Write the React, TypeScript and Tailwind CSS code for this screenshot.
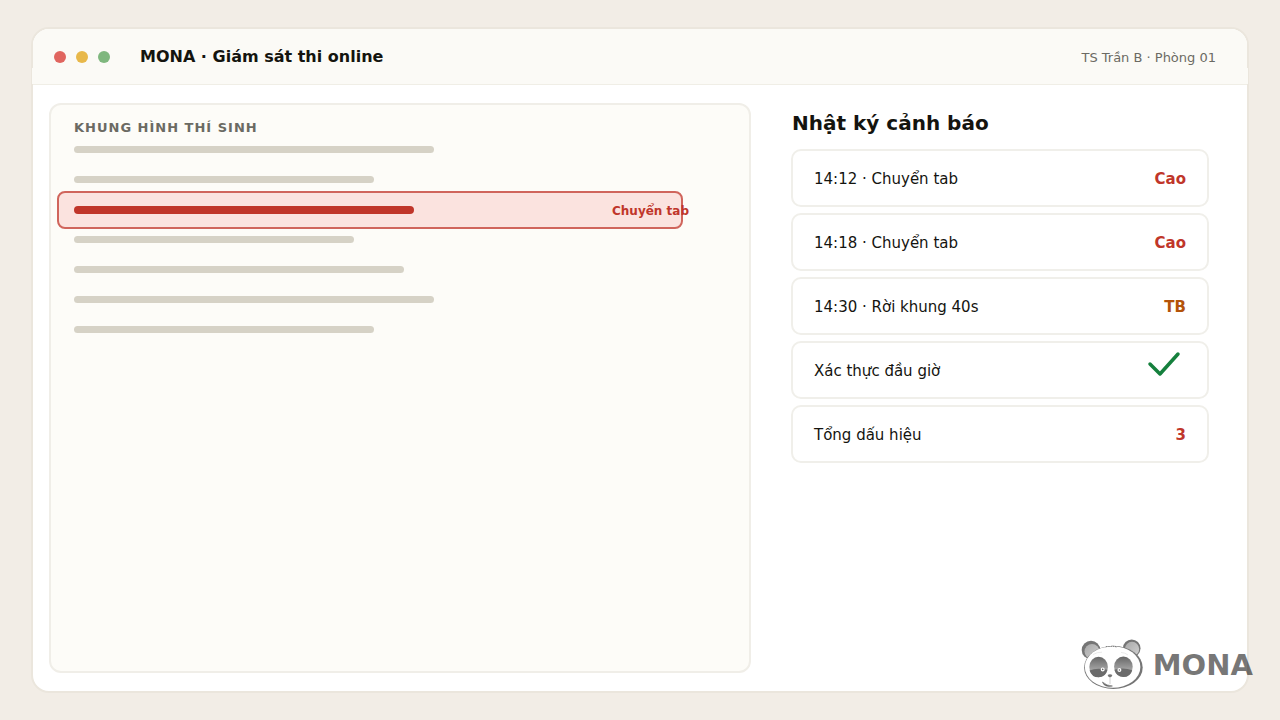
import { clsx } from "clsx"

const frameLines = [
  { width: 360 },
  { width: 300 },
  { width: 340, alert: "Chuyển tab" },
  { width: 280 },
  { width: 330 },
  { width: 360 },
  { width: 300 },
]

const logEntries = [
  { label: "14:12 · Chuyển tab", value: "Cao", tone: "high" },
  { label: "14:18 · Chuyển tab", value: "Cao", tone: "high" },
  { label: "14:30 · Rời khung 40s", value: "TB", tone: "medium" },
  { label: "Xác thực đầu giờ", value: "", tone: "ok" },
  { label: "Tổng dấu hiệu", value: "3", tone: "high" },
]

function CheckMark() {
  return (
    <svg className="mr-1 mb-3.5 h-7 w-9" viewBox="0 0 36 28" fill="none" role="img" aria-label="Đạt">
      <path d="M4 14l10 10L32 4" stroke="#15803d" strokeWidth="3.5" strokeLinecap="round" strokeLinejoin="round" />
    </svg>
  )
}

function PandaLogo() {
  return (
    <svg className="h-[52px] w-16" viewBox="0 0 64 52" fill="none" aria-hidden="true">
      <defs>
        <linearGradient id="ear" x1="0" y1="0" x2="1" y2="1">
          <stop offset="0" stopColor="#a8a8a8" />
          <stop offset="1" stopColor="#d0d0d0" />
        </linearGradient>
        <linearGradient id="patch" x1="0" y1="0" x2="0" y2="1">
          <stop offset="0" stopColor="#666" />
          <stop offset="0.6" stopColor="#a0a0a0" />
        </linearGradient>
      </defs>

      {/* Ears */}
      <circle cx="11" cy="12" r="9.3" fill="#757575" />
      <circle cx="12" cy="13.5" r="7.5" fill="url(#ear)" />
      <circle cx="51.7" cy="10.3" r="8.8" fill="#757575" />
      <circle cx="52" cy="11" r="7.2" fill="url(#ear)" />

      {/* Head */}
      <ellipse cx="33.4" cy="29.4" rx="29.3" ry="21.6" fill="#757575" />
      <ellipse cx="32.6" cy="29" rx="27.8" ry="20.8" fill="#fff" />
      <path d="M26 9.4l1-1.4M28.5 9l1-1M31 9l.6-1.2M33.5 9l-.4-1.2M36 9.4l-1-1.4" stroke="#666" strokeWidth="0.8" />
      <path d="M13 16.6q4-2.6 9-2.4M41 14.4q4 .2 7 2.6" stroke="#e4e4e4" strokeWidth="0.8" />

      {/* Eyes */}
      <ellipse cx="18.6" cy="29" rx="9.3" ry="10.2" fill="url(#patch)" />
      <path d="M9.6 32.4q7-3.2 17.8-.6-1.6 7.400-8.800 7.400-7 0-9-6.800z" fill="#6b6b6b" />
      <ellipse cx="43.4" cy="28.8" rx="9.3" ry="10.2" fill="url(#patch)" />
      <path d="M34.4 31.800q9-3 17.800.4-1.800 6.800-8.800 6.800-7 0-9-7.200z" fill="#6b6b6b" />
      <circle cx="22.7" cy="31.4" r="1.4" fill="#666" stroke="#fff" strokeWidth="1.2" />
      <circle cx="39.4" cy="32" r="1.4" fill="#666" stroke="#fff" strokeWidth="1.2" />

      {/* Nose and mouth */}
      <path d="M27.6 37q2.400-1.400 4.800 0-.6 2.400-2.400 2.400t-2.400-2.400z" fill="#777" />
      <path d="M30 39.4v6.600" stroke="#c4c4c4" strokeWidth="0.8" />
      <path d="M22.4 44q4.400 3.800 10 4-5.600 1.400-8.600-1.600z" fill="#666" stroke="#666" strokeWidth="0.6" />
    </svg>
  )
}

export default function App() {
  return (
    <div className="relative flex min-h-screen flex-col bg-[#f2ede6] px-[31px] py-[27px] font-['DejaVu_Sans',sans-serif] text-[#14140f]">
      <main className="flex flex-1 flex-col rounded-[18px] border-2 border-[#ebe6dd] bg-white">
        {/* Title bar */}
        <header className="relative flex h-14 items-center rounded-t-2xl border-b border-[#f0eee6] bg-[#fbfaf6] pr-[31px] pl-[21px] before:absolute before:-inset-x-px before:bottom-0 before:h-4 before:bg-[#fbfaf6]">
          <div className="flex gap-2.5">
            <span className="size-3 rounded-full bg-[#e0655f]" />
            <span className="size-3 rounded-full bg-[#e8b84a]" />
            <span className="size-3 rounded-full bg-[#7fb77e]" />
          </div>
          <h1 className="relative ml-[30px] text-base font-bold">MONA · Giám sát thi online</h1>
          <p className="relative mt-0.5 ml-auto text-[13px] text-[#6b6a63]">TS Trần B · Phòng 01</p>
        </header>

        <div className="grid flex-1 grid-cols-[702fr_418fr] gap-10 pt-[18px] pr-[38px] pb-[18px] pl-4">
          {/* Candidate frame */}
          <section className="rounded-xl border-2 border-[#f0eee8] bg-[#fdfcf8] px-[23px] pt-[13px]">
            <h2 className="text-[13px] leading-5 font-bold tracking-[1px] text-[#6b6a63]">KHUNG HÌNH THÍ SINH</h2>
            <ul className="mt-2">
              {frameLines.map((line, i) =>
                line.alert ? (
                  <li
                    key={i}
                    className="-mt-[15px] mr-[43px] mb-[7px] -ml-[17px] flex h-[38px] items-center rounded-lg border-2 border-[#d0655c] bg-[#fbe3df] pl-[15px]"
                  >
                    <span className="h-2 rounded-full bg-[#c0362a]" style={{ width: line.width }} />
                    <span className="-mr-2 ml-auto pt-0.5 text-xs font-bold text-[#c0362a]">{line.alert}</span>
                  </li>
                ) : (
                  <li key={i} className="h-[30px]">
                    <span className="block h-[7px] rounded-full bg-[#d6d2c6]" style={{ width: line.width }} />
                  </li>
                )
              )}
            </ul>
          </section>

          {/* Alert log */}
          <section>
            <h2 className="mt-1 pl-px text-xl leading-8 font-bold">Nhật ký cảnh báo</h2>
            <ul className="mt-2.5 space-y-1.5">
              {logEntries.map((entry) => (
                <li
                  key={entry.label}
                  className="flex h-[58px] items-center justify-between rounded-[10px] border-2 border-[#f0efea] bg-white px-[21px] pt-0.5 text-[15px]"
                >
                  <span>{entry.label}</span>
                  {entry.tone === "ok" ? (
                    <CheckMark />
                  ) : (
                    <span className={clsx("font-bold", entry.tone === "medium" ? "text-[#b45309]" : "text-[#c0362a]")}>
                      {entry.value}
                    </span>
                  )}
                </li>
              ))}
            </ul>
          </section>
        </div>
      </main>

      {/* Brand mark over the window corner */}
      <div className="absolute right-[27px] bottom-[30px] flex items-center gap-[9px]">
        <PandaLogo />
        <span className="pt-0.5 text-[29px] leading-none font-bold text-black/55">MONA</span>
      </div>
    </div>
  )
}
